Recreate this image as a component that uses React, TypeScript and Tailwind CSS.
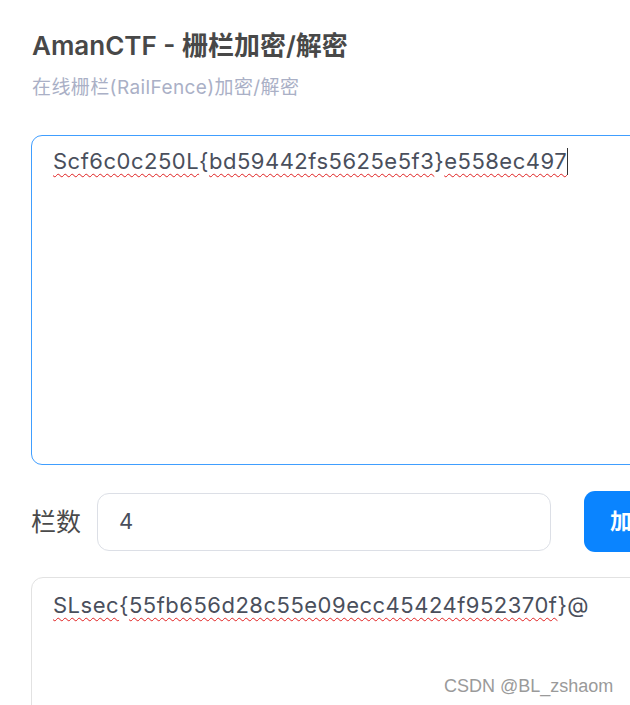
const sans = "font-['Inter','Noto_Sans_CJK_SC',sans-serif]"

function Squiggle({ children }: { children: React.ReactNode }) {
  return (
    <span className="underline decoration-wavy decoration-[#e02020] decoration-1 underline-offset-[4px]">
      {children}
    </span>
  )
}

export default function App() {
  return (
    <div className={`${sans} w-[630px] h-[705px] overflow-hidden bg-white relative`}>
      <div className="w-[820px] pl-[31px] pt-[28px]">
        <h1 className="text-[26px] leading-[36px] font-semibold text-[#484848] pl-px">
          AmanCTF - 栅栏加密/解密
        </h1>
        <p className="mt-[11px] text-[19px] leading-[26px] tracking-[0.4px] text-[#aab0c6] pl-px">
          在线栅栏(RailFence)加密/解密
        </p>

        {/* input text */}
        <div className="mt-[34px] h-[330px] border border-[#409eff] rounded-[11px] px-[21px] pt-[10px] text-[22px] leading-[30px] tracking-[0.5px] text-[#4a4f5c]">
          <Squiggle>Scf6c0c250L</Squiggle>
          {'{'}
          <Squiggle>bd59442fs5625e5f3</Squiggle>
          {'}'}
          <Squiggle>e558ec497</Squiggle>
          <span className="inline-block w-px h-[27px] bg-[#333] align-[-6px]" />
        </div>

        {/* rails + buttons */}
        <div className="mt-[26px] flex items-center">
          <span className="text-[25px] leading-[32px] text-[#4a4a4a] w-[66px]">栏数</span>
          <div className="w-[454px] h-[58px] border border-[#dcdfe6] rounded-[12px] flex items-center pl-[21px] text-[22px] text-[#4a4f5c]">
            4
          </div>
          <button className="ml-[33px] h-[61px] w-[130px] rounded-[11px] bg-[#0a84ff] text-white text-[22px] font-bold text-left pl-[26px] whitespace-nowrap">
            加密
          </button>
        </div>

        {/* output */}
        <div className="mt-[25px] h-[200px] border border-[#e2e2e2] rounded-[12px] px-[21px] pt-[12px] text-[22px] leading-[30px] tracking-[0.5px] text-[#4a4f5c]">
          <Squiggle>SLsec</Squiggle>
          {'{'}
          <Squiggle>55fb656d28c55e09ecc45424f952370f</Squiggle>
          {'}@'}
        </div>
      </div>

      <div className="absolute left-[444px] top-[674px] text-[18px] leading-[24px] text-[#9a9a9a] font-['Liberation_Sans',sans-serif]">
        CSDN @BL_zshaom
      </div>
    </div>
  )
}
